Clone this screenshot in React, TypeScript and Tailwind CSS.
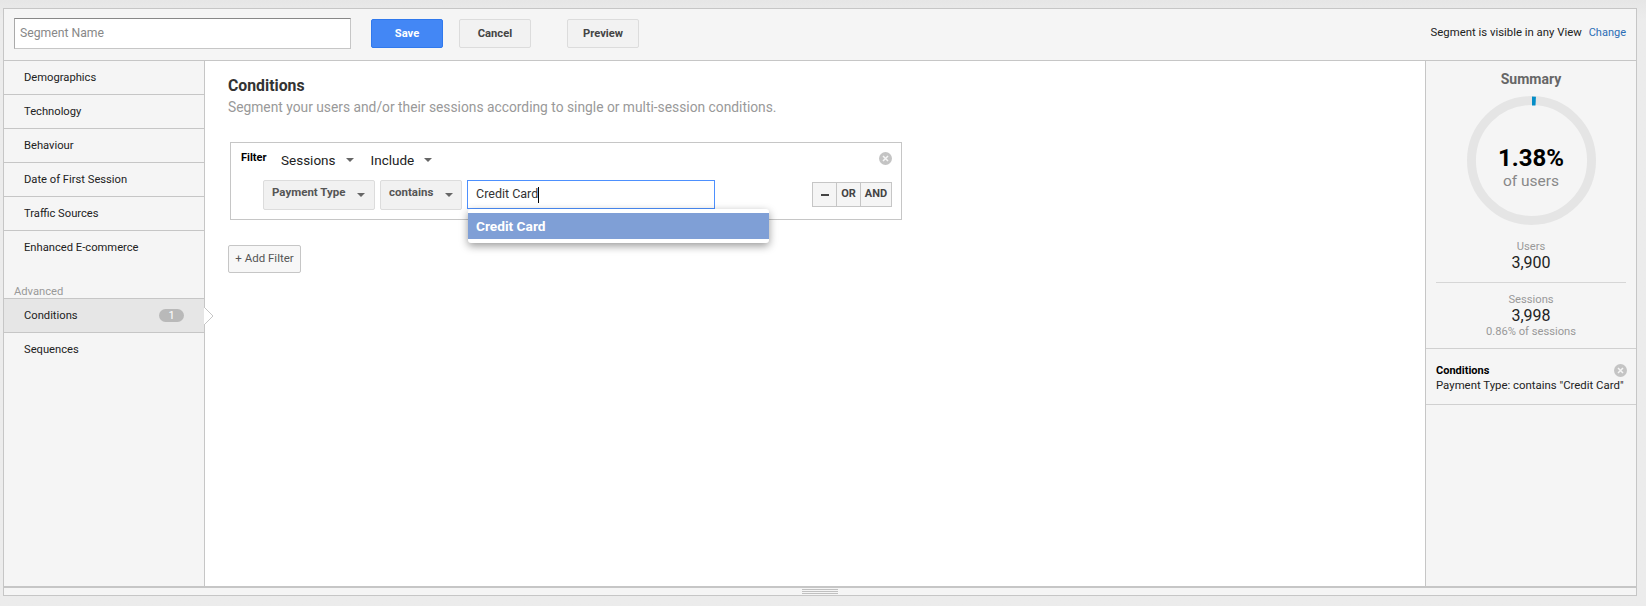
const navItems = ['Demographics', 'Technology', 'Behaviour', 'Date of First Session', 'Traffic Sources', 'Enhanced E-commerce'];

// small grey arrow used by the dropdowns
function Caret() {
  return <span className="inline-block w-0 h-0 border-x-[4px] border-x-transparent border-t-[4px] border-t-[#666]" />;
}

function CloseDot() {
  return (
    <svg width="13" height="13" viewBox="0 0 13 13">
      <circle cx="6.5" cy="6.5" r="6.5" fill="#c4c4c4" />
      <path d="M4 4 L9 9 M9 4 L4 9" stroke="#f5f5f5" strokeWidth="1.5" />
    </svg>
  );
}

function Sidebar() {
  return (
    <aside className="w-[201px] shrink-0 bg-[#f5f5f5] border-r border-[#c6c6c6] relative text-[11.2px]">
      {navItems.map((item, i) => (
        <div key={item} className={`h-[34px] pl-[20px] pt-[9px] leading-[16px] text-[#222] ${i < 5 ? 'border-b border-[#c6c6c6]' : ''}`}>
          {item}
        </div>
      ))}
      <div className="pl-[10px] pt-[20px] h-[33px] leading-[14px] text-[#999]">Advanced</div>
      <div className="relative h-[35px] flex items-center justify-between pl-[20px] pr-[20px] bg-[#e6e6e6] border-y border-[#c6c6c6] text-[#222]">
        <span className="mt-[2px]">Conditions</span>
        <span className="w-[25px] h-[13px] rounded-full bg-[#b9b9b9] text-white text-[11px] leading-[13px] text-center">1</span>
        <svg className="absolute right-[-10px] top-[8px]" width="10" height="18" viewBox="0 0 10 18">
          <path d="M0 0 L9 9 L0 18 Z" fill="#fff" />
          <path d="M0 0 L9 9 L0 18" fill="none" stroke="#c6c6c6" />
        </svg>
      </div>
      <div className="h-[34px] pl-[20px] pt-[9px] leading-[16px] text-[#222]">Sequences</div>
    </aside>
  );
}

function FilterBox() {
  return (
    <div className="relative w-[672px] h-[78px] ml-[2px] border border-[#c6c6c6] mt-[25px]">
      <div className="flex items-start pl-[10px] pt-[8px]">
        <span className="text-[11px] leading-[14px] font-bold text-black w-[40px]">Filter</span>
        <span className="text-[13.5px] leading-[18px] text-[#222] flex items-center gap-[10px] mr-[17px]">Sessions <Caret /></span>
        <span className="text-[13.5px] leading-[18px] text-[#222] flex items-center gap-[10px]">Include <Caret /></span>
      </div>
      <div className="absolute right-[9px] top-[9px]"><CloseDot /></div>
      <div className="flex items-start pl-[32px] mt-[11px]">
        <div className="w-[112px] h-[30px] flex items-center justify-between pl-[8px] pr-[9px] bg-[#f1f1f1] border border-[#dcdcdc] rounded-[2px] text-[11.5px] font-bold text-[#555]">
          <span className="mt-[-4px]">Payment Type</span><Caret />
        </div>
        <div className="w-[82px] h-[30px] ml-[5px] flex items-center justify-between pl-[8px] pr-[8px] bg-[#f1f1f1] border border-[#dcdcdc] rounded-[2px] text-[11.5px] font-bold text-[#555]">
          <span className="mt-[-4px]">contains</span><Caret />
        </div>
        <div className="relative w-[248px] h-[29px] ml-[5px] flex items-center pl-[8px] border border-[#4d90fe] text-[12.5px] text-[#333]">
          Credit Card<span className="w-px h-[16px] bg-black" />
          <div className="absolute left-0 top-[28px] w-[301px] h-[34px] py-[4px] bg-white rounded-[3px] shadow-[0_3px_8px_rgba(0,0,0,0.4)] z-10">
            <div className="h-[26px] pl-[8px] bg-[#7f9fd6] text-white text-[13.7px] font-bold leading-[26px]">Credit Card</div>
          </div>
        </div>
        <div className="flex ml-auto mr-[9px] mt-[2px] h-[25px] border border-[#c6c6c6] bg-[#f5f5f5] text-[11px] font-bold text-[#444]">
          <span className="w-[24px] flex items-center justify-center border-r border-[#c6c6c6]"><span className="w-[8px] h-[2px] bg-[#444]" /></span>
          <span className="w-[24px] flex items-center justify-center border-r border-[#c6c6c6]">OR</span>
          <span className="w-[30px] flex items-center justify-center">AND</span>
        </div>
      </div>
    </div>
  );
}

function Summary() {
  return (
    <aside className="w-[211px] shrink-0 bg-[#f5f5f5] border-l border-[#c6c6c6] text-center">
      <div className="pt-[8px] text-[14px] leading-[20px] font-bold text-[#666]">Summary</div>
      <div className="relative w-[129px] h-[129px] mx-auto mt-[7px]">
        <svg width="129" height="129" viewBox="0 0 130 130">
          <circle cx="65" cy="65" r="60.5" fill="none" stroke="#e5e5e5" strokeWidth="9" />
          <path d="M65.5 0.5 L69.5 0.8 L69 9.5 L65.5 9.5 Z" fill="#058dc7" />
        </svg>
        <div className="absolute inset-0 flex flex-col items-center justify-center pt-[12px]">
          <div className="text-[24px] leading-[28px] font-bold text-black">1.38%</div>
          <div className="text-[15.5px] leading-[18px] text-[#888]">of users</div>
        </div>
      </div>
      <div className="mt-[14px] text-[11.2px] leading-[15px] text-[#999]">Users</div>
      <div className="text-[16px] leading-[17px] text-[#222]">3,900</div>
      <div className="mx-[10px] mt-[11px] border-t border-[#d6d6d6]" />
      <div className="mt-[9px] text-[11.2px] leading-[15px] text-[#999]">Sessions</div>
      <div className="text-[16px] leading-[17px] text-[#222]">3,998</div>
      <div className="mt-[1px] text-[11.2px] leading-[13px] text-[#999]">0.86% of sessions</div>
      <div className="relative mt-[10px] h-[57px] border-y border-[#d0d0d0] text-left pl-[10px] pt-[14px] text-[11.4px] leading-[15px] text-[#222]">
        <div className="font-bold text-black text-[11px]">Conditions</div>
        <div>Payment Type: contains "Credit Card"</div>
        <div className="absolute right-[9px] top-[15px]"><CloseDot /></div>
      </div>
    </aside>
  );
}

export default function App() {
  return (
    <div className="h-screen pt-[8px] pl-[3px] pr-[9px] font-['Roboto',sans-serif] bg-gradient-to-b from-[#e6e6e6] to-[#ececec] to-[20px]">
      <div className="h-[588px] flex flex-col border border-[#c6c6c6] bg-white">
        {/* top bar */}
        <div className="h-[52px] shrink-0 flex items-center bg-[#f5f5f5] border-b border-[#c6c6c6] pl-[10px] pr-[10px] pb-[3px]">
          <input
            placeholder="Segment Name"
            className="w-[337px] h-[31px] mr-[20px] px-[5px] bg-white border border-[#c6c6c6] border-t-[#888] border-l-[#aaa] text-[12.2px] placeholder:text-[#888] outline-none"
          />
          <button className="w-[72px] h-[29px] mr-[16px] pt-[2px] rounded-[2px] bg-[#4387f5] border border-[#3079ed] text-white text-[11.2px] font-bold">Save</button>
          <button className="w-[72px] h-[29px] mr-[36px] pt-[2px] rounded-[2px] bg-[#f2f2f2] border border-[#dcdcdc] text-[#444] text-[11.2px] font-bold">Cancel</button>
          <button className="w-[72px] h-[29px] pt-[2px] rounded-[2px] bg-[#f2f2f2] border border-[#dcdcdc] text-[#444] text-[11.2px] font-bold">Preview</button>
          <span className="ml-auto text-[11.35px] text-[#222]">Segment is visible in any View</span>
          <span className="ml-[7px] text-[11px] text-[#2b6db5]">Change</span>
        </div>

        {/* body */}
        <div className="h-[525px] flex min-h-0">
          <Sidebar />
          <main className="flex-1 pl-[23px] pt-[15px]">
            <h1 className="text-[15.8px] leading-[20px] font-bold text-[#333]">Conditions</h1>
            <p className="text-[13.8px] leading-[20px] text-[#999] mt-[1px]">Segment your users and/or their sessions according to single or multi-session conditions.</p>
            <FilterBox />
            <button className="block mt-[25px] w-[73px] h-[28px] rounded-[2px] bg-[#f7f7f7] border border-[#c6c6c6] text-[11.5px] text-[#555]">+ Add Filter</button>
          </main>
          <Summary />
        </div>

        {/* resize handle */}
        <div className="flex-1 border-t-2 border-[#c6c6c6] bg-[#f5f5f5] flex items-center justify-center">
          <div className="w-[36px] flex flex-col gap-[1px]">
            <div className="h-px bg-[#c0c0c0]" />
            <div className="h-px bg-[#c0c0c0]" />
            <div className="h-px bg-[#c0c0c0]" />
          </div>
        </div>
      </div>
    </div>
  );
}
